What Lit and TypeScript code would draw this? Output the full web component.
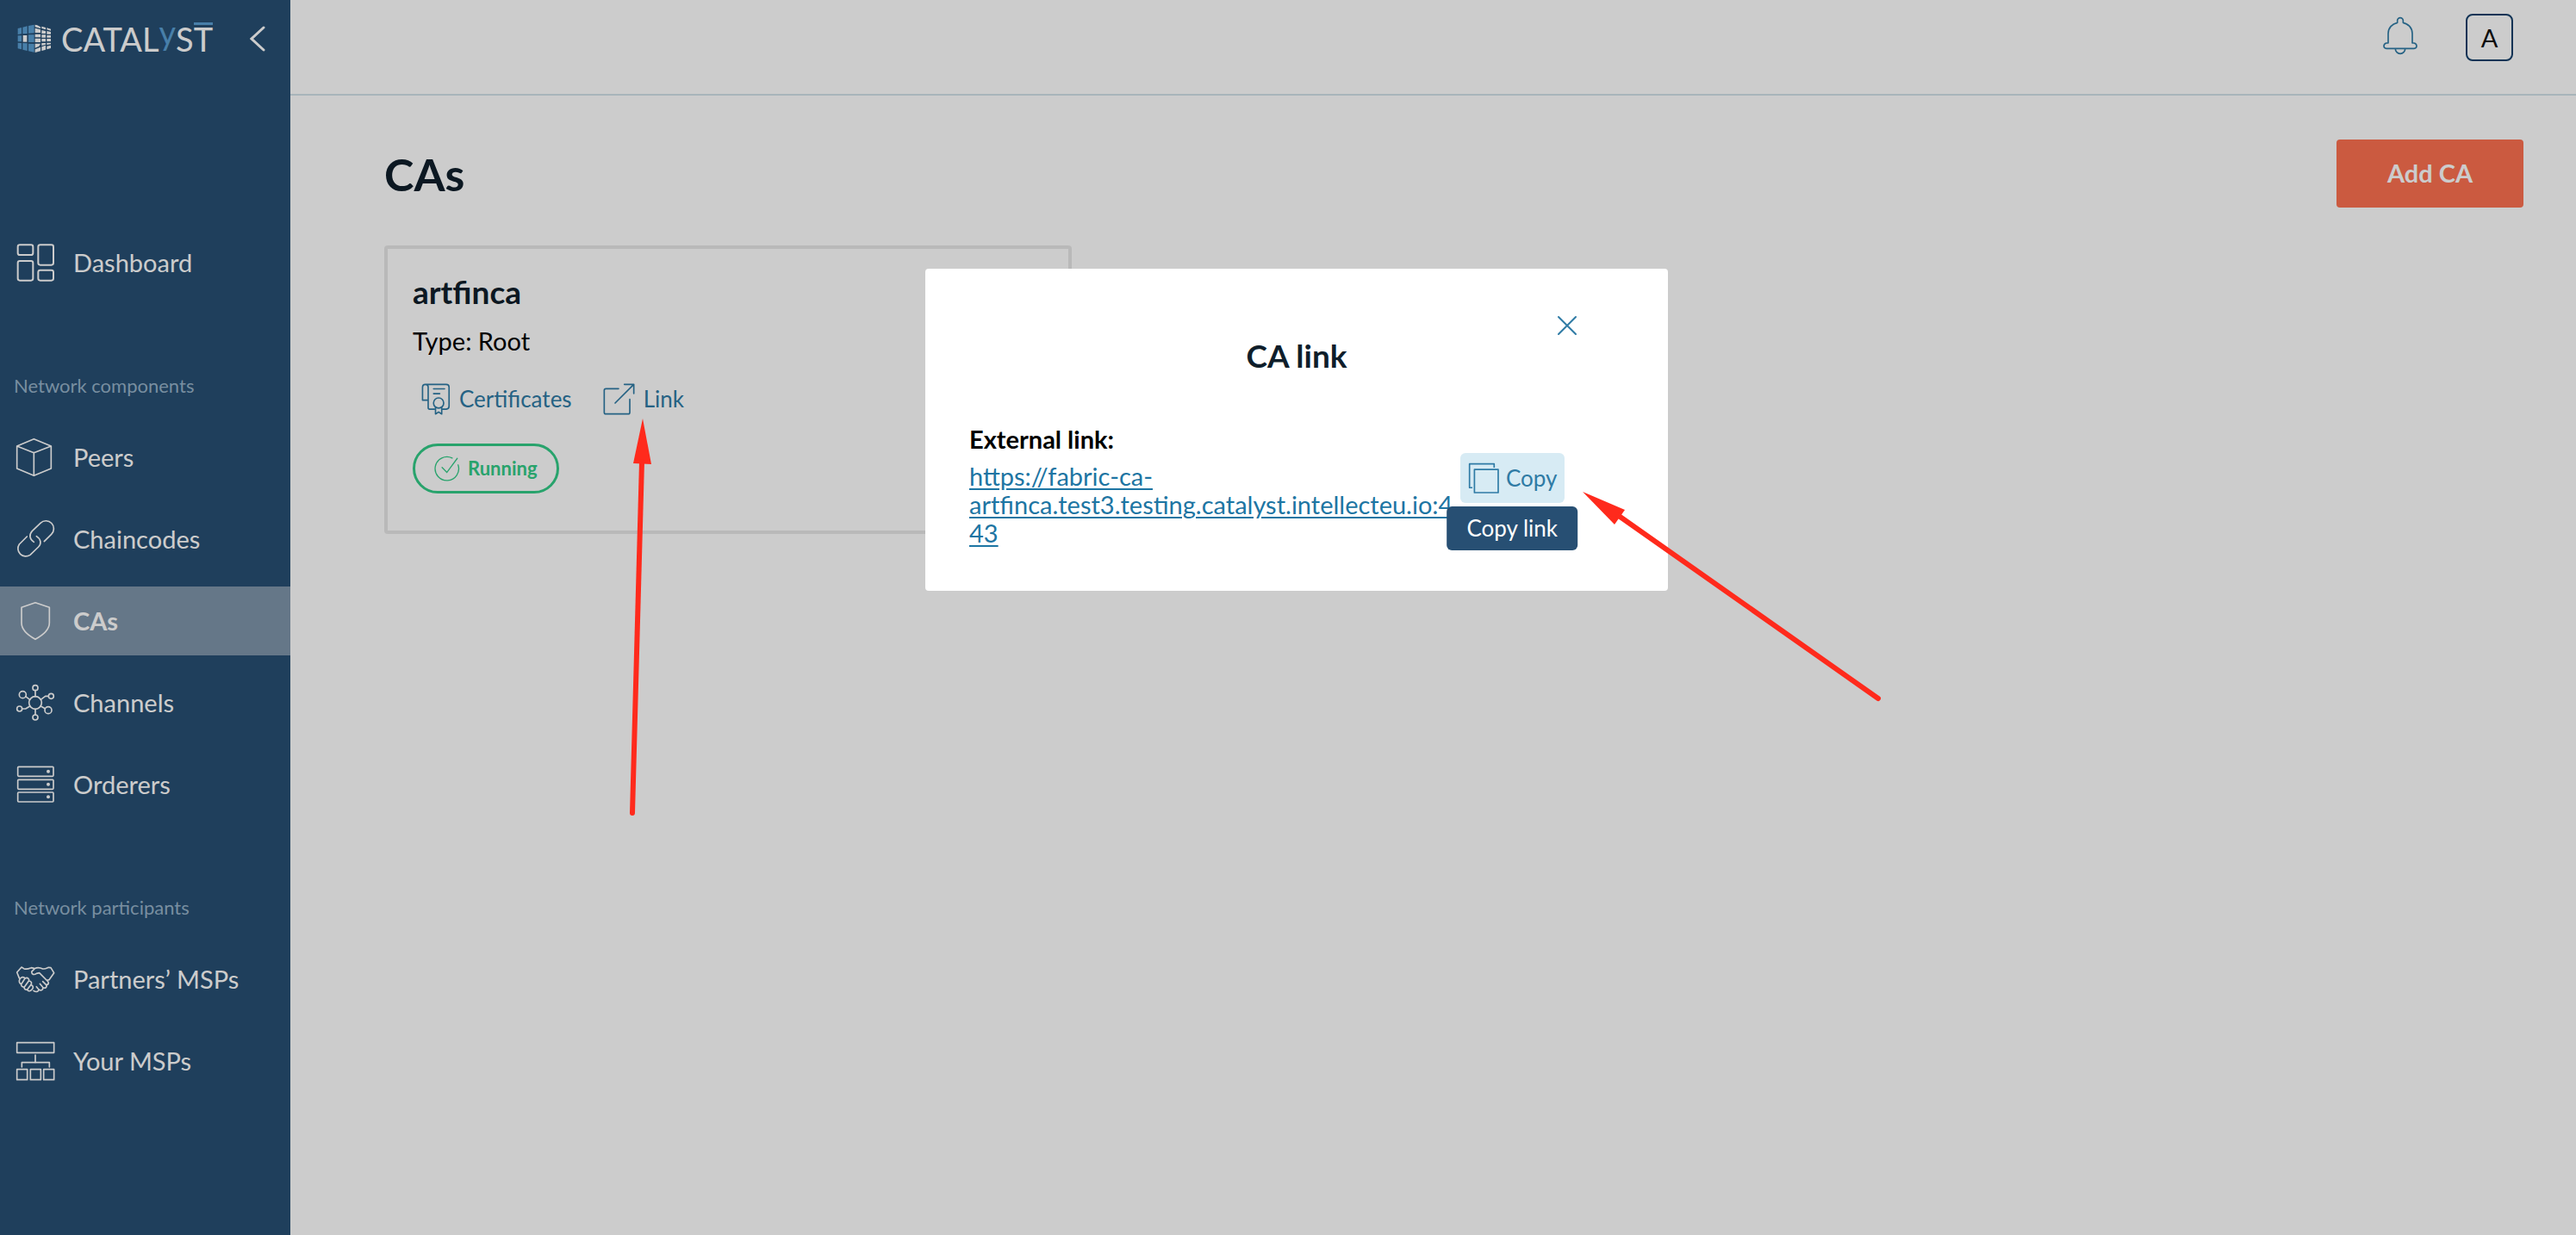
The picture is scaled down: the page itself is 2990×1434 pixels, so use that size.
import { LitElement, html, svg, css, nothing } from "lit";
import { customElement } from "lit/decorators.js";
import { classMap } from "lit/directives/class-map.js";

const icons: Record<string, unknown> = {
  dashboard: svg`<g stroke-width="6"><rect x="5" y="4" width="53" height="35" rx="7"/><rect x="76" y="4" width="53" height="70" rx="7"/><rect x="5" y="60" width="53" height="68" rx="7"/><rect x="76" y="92" width="53" height="36" rx="7"/></g>`,
  peers: svg`<path d="M61 2 121 27V105L61 130 2 105V27ZM2 27 61 50 121 27M61 50V130"/>`,
  chaincodes: svg`<path d="M97 74 122 49A27 27 0 0 0 84 10L55 38C44 50 45 66 61 76M37 57 10 84A27 27 0 0 0 48 121L77 93C88 82 86 66 70 56"/>`,
  cas: svg`<path d="M66 2 115 19V73C115 98 90 117 66 130C42 117 18 98 18 73V19Z"/>`,
  channels: svg`<circle cx="66" cy="66" r="22"/><circle cx="66" cy="14" r="9"/><circle cx="22" cy="38" r="12"/><circle cx="11" cy="87" r="9"/><circle cx="121" cy="43" r="9"/><circle cx="111" cy="92" r="12"/><circle cx="66" cy="117" r="9"/><path d="M66 23V44M66 88V108M32 44 47 55M20 87H32L47 78M112 43H101L85 55M85 78 100 86"/>`,
  orderers: svg`<rect x="5" y="4" width="124" height="33" rx="3"/><rect x="5" y="49" width="124" height="33" rx="3"/><rect x="5" y="93" width="124" height="33" rx="3"/><g fill="currentColor" stroke="none"><circle cx="111" cy="20" r="6"/><circle cx="111" cy="65" r="6"/><circle cx="111" cy="109" r="6"/></g>`,
  partners: svg`<path stroke-width="5" d="M10 62 2 42 18 24 26 29C36 33 44 29 52 26L64 29M64 29C72 24 82 25 92 30C102 31 106 27 112 25L120 26 131 44 114 68L106 70M64 29 53 40C53 50 62 52 70 46L80 44 108 72C116 80 110 88 102 84M92 74 104 86C108 94 100 100 92 94L82 82M92 94C94 104 86 107 78 102L70 92M78 102C78 110 68 112 60 106M12 66C16 58 26 56 30 63C40 58 46 66 43 72C52 72 56 80 50 86C60 88 60 96 54 102C48 110 40 108 38 102C30 104 26 98 28 93C20 94 14 88 18 82C10 82 8 72 12 66ZM30 63 18 82M43 72 28 93M50 86 38 102"/>`,
  msps: svg`<rect x="2" y="2" width="129" height="35"/><path d="M66 45V72M19 87V71H115V87"/><rect x="2" y="95" width="36" height="36"/><rect x="49" y="95" width="36" height="36"/><rect x="95" y="95" width="36" height="36"/>`,
};

interface NavItem { icon: string; label: string; active?: boolean }
const groups: { title?: string; items: NavItem[] }[] = [
  { items: [{ icon: "dashboard", label: "Dashboard" }] },
  {
    title: "Network components",
    items: [
      { icon: "peers", label: "Peers" },
      { icon: "chaincodes", label: "Chaincodes" },
      { icon: "cas", label: "CAs", active: true },
      { icon: "channels", label: "Channels" },
      { icon: "orderers", label: "Orderers" },
    ],
  },
  {
    title: "Network participants",
    items: [
      { icon: "partners", label: "Partners’ MSPs" },
      { icon: "msps", label: "Your MSPs" },
    ],
  },
];

const linkUrl = "https://fabric-ca-artfinca.test3.testing.catalyst.intellecteu.io:443";

@customElement("app-sidebar")
class AppSidebar extends LitElement {
  static styles = css`
    :host { display: block; background: #274f73; color: #fff; }
    .top { display: flex; align-items: center; justify-content: space-between; height: 90px; padding: 0 29px 0 20px; box-sizing: border-box; }
    .brand { display: flex; align-items: center; gap: 11px; color: #fff; text-decoration: none; }
    .mark { width: 40px; height: 34px; display: block; }
    .name { font-size: 38px; line-height: 44px; font-weight: 400; }
    .y { color: #5a9fd4; vertical-align: 8px; line-height: 0; }
    .bar { position: relative; }
    .bar::before { content: ""; position: absolute; left: 0; right: 0; top: 4px; height: 3px; background: #5a9fd4; }
    .collapse { border: 0; background: none; color: inherit; padding: 0; display: flex; }
    .collapse svg { width: 18px; height: 30px; }
    nav { padding-top: 175px; }
    .title { margin: 0; padding: 89px 16px 29px; font-size: 22px; line-height: 28px; font-weight: 400; color: #96b2c8; }
    ul { list-style: none; margin: 0; padding: 0; display: flex; flex-direction: column; gap: 15px; }
    .item { display: flex; align-items: center; gap: 22px; height: 80px; padding-left: 19px; color: inherit; text-decoration: none; font-size: 29px; line-height: 36px; }
    .item.active { background: #7f95aa; font-weight: 700; }
    .icon { width: 44px; height: 44px; fill: none; stroke: currentColor; stroke-width: 5; stroke-linejoin: round; stroke-linecap: round; overflow: visible; }
  `;
  render() {
    return html`
      <div class="top">
        <a class="brand" href="#">
          <svg class="mark" viewBox="62 84 120 102" aria-hidden="true">
            <g fill="#5a9fd4">
              <path d="M64 99 77 96V118L64 120ZM81 95 97 91V117L81 118ZM101 90 121 86V115L101 116Z"/>
              <path d="M64 124H77V145H64ZM101 121H121V147H101Z"/>
              <path d="M64 149 77 150V172L64 169ZM81 150 97 151V177L81 173ZM101 152 121 153V182L101 178Z"/>
            </g>
            <g fill="#fff">
              <path d="M82 123H96V146H82Z"/>
              <path d="M124 86 132 88 143 94V99L124 94ZM124 98 143 103V114H124ZM124 119H143V130H124ZM124 134H143V147H124ZM124 152H143L138 161 124 167ZM124 172 143 164V178L124 183Z"/>
              <path d="M147 92 161 96V103L147 99ZM147 105 161 108V117H147ZM147 121H161V131H147ZM147 135H161V145H147ZM147 150H161V155L147 159ZM147 163 161 158V173L147 177Z"/>
              <path d="M165 97 179 101V107L165 103ZM165 108 179 111V119H165ZM165 123H179V131H165ZM165 135H179V144H165ZM165 149H179V154L165 156ZM165 161 179 158V168L165 172Z"/>
            </g>
          </svg>
          <span class="name">CATAL<span class="y">y</span>S<span class="bar">T</span></span>
        </a>
        <button class="collapse" aria-label="Collapse menu">
          <svg viewBox="0 0 18 30" fill="none" stroke="currentColor" stroke-width="3" stroke-linecap="round"><path d="M16 2 2 15 16 28"/></svg>
        </button>
      </div>
      <nav>
        ${groups.map((g) => html`
          ${g.title ? html`<h2 class="title">${g.title}</h2>` : nothing}
          <ul>
            ${g.items.map((i) => html`<li>
              <a href="#" class=${classMap({ item: true, active: !!i.active })}>
                <svg class="icon" viewBox="0 0 132 132" aria-hidden="true">${icons[i.icon]}</svg>
                <span>${i.label}</span>
              </a>
            </li>`)}
          </ul>`)}
      </nav>
    `;
  }
}

@customElement("ca-card")
class CaCard extends LitElement {
  static styles = css`
    :host { display: block; box-sizing: border-box; border: 4px solid #e8e8e8; border-radius: 4px; padding: 28px 29px 43px; }
    h2 { margin: 0; font-size: 37px; line-height: 44px; font-weight: 700; color: #0f1e2b; }
    .type { margin: 18px 0 21px; font-size: 29px; line-height: 34px; color: #000; }
    .actions { display: flex; gap: 16px; margin-bottom: 23px; }
    .action { display: flex; align-items: center; gap: 10px; height: 58px; padding: 0 10px; border: 0; background: none; color: #2f7ba5; font-family: inherit; font-size: 26px; line-height: 32px; }
    .action svg { height: 37px; fill: none; stroke: currentColor; stroke-width: 5; stroke-linecap: round; stroke-linejoin: round; }
    .cert { width: 34px; }
    .out { width: 37px; }
    .status { display: inline-flex; align-items: center; gap: 9px; box-sizing: border-box; height: 58px; padding: 0 22px; border: 3px solid #33cc88; border-radius: 29px; color: #33cc88; font-size: 22px; line-height: 30px; font-weight: 700; }
    .status svg { width: 30px; height: 30px; fill: none; stroke: currentColor; stroke-width: 4; stroke-linecap: round; }
  `;
  render() {
    return html`
      <h2>artfinca</h2>
      <p class="type">Type: Root</p>
      <div class="actions">
        <button class="action">
          <svg class="cert" viewBox="179 884 101 113" aria-hidden="true"><path d="M224 976H207Q202 976 202 970V898Q202 888 192 888Q182 888 182 898V944H201M192 888H266Q276 888 276 898V966Q276 976 266 976H254M221 904H260M221 921H243M228 969V993L239 986 250 993V969"/><circle cx="239" cy="954" r="18"/></svg>
          Certificates
        </button>
        <button class="action">
          <svg class="out" viewBox="814 886 111 111" aria-hidden="true"><path d="M868 905H824Q818 905 818 911V987Q818 993 824 993H901Q907 993 907 987V942M856 955 920 891M888 890H921V922"/></svg>
          Link
        </button>
      </div>
      <div class="status">
        <svg viewBox="223 1134 92 92" aria-hidden="true"><path d="M287 1143A42 42 0 1 0 308 1167M251 1176 268 1194 305 1144"/></svg>
        Running
      </div>
    `;
  }
}

@customElement("link-dialog")
class LinkDialog extends LitElement {
  static styles = css`
    :host { display: block; position: relative; box-sizing: border-box; width: 862px; max-width: 100%; padding: 79px 51px 51px; background: #fff; border-radius: 4px; }
    h2 { margin: 0 0 58px; font-size: 37px; line-height: 44px; font-weight: 700; text-align: center; color: #0f1e2b; }
    .close { position: absolute; right: 99px; top: 48px; width: 36px; height: 36px; padding: 0; border: 0; background: none; color: #2f7ba5; display: flex; align-items: center; justify-content: center; }
    .close svg { width: 24px; height: 24px; }
    .body { display: flex; align-items: flex-start; }
    .text { width: 570px; }
    .label { margin: 0 0 9px; font-size: 29px; line-height: 34px; font-weight: 700; color: #000; }
    .url { display: block; font-size: 29px; line-height: 33px; color: #1d75a3; text-underline-offset: 3px; overflow-wrap: anywhere; }
    .copybox { position: relative; margin-top: 33px; }
    .copy { display: flex; align-items: center; gap: 8px; height: 58px; padding: 0 8px 0 9px; border: 0; border-radius: 6px; background: #d7ebf4; color: #2f7ba5; font-family: inherit; font-size: 26px; line-height: 32px; }
    .copy svg { width: 36px; height: 36px; }
    .tip { position: absolute; top: 62px; left: 50%; transform: translateX(-50%); padding: 9px 23px; border-radius: 6px; background: #274f73; color: #fff; font-size: 26px; line-height: 33px; white-space: nowrap; }
  `;
  render() {
    return html`
      <button class="close" aria-label="Close">
        <svg viewBox="0 0 24 24" fill="none" stroke="currentColor" stroke-width="2" stroke-linecap="round"><path d="M2 2 22 22M22 2 2 22"/></svg>
      </button>
      <h2>CA link</h2>
      <div class="body">
        <div class="text">
          <p class="label">External link:</p>
          <a class="url" href=${linkUrl}>${linkUrl}</a>
        </div>
        <div class="copybox">
          <button class="copy" aria-describedby="tip">
            <svg viewBox="551 713 107 107" fill="none" stroke="currentColor" stroke-width="5" stroke-linejoin="round" aria-hidden="true"><path d="M641 731V718H556V800H566M573 737H655V817H573Z"/></svg>
            Copy
          </button>
          <div class="tip" id="tip" role="tooltip">Copy link</div>
        </div>
      </div>
    `;
  }
}

@customElement("app-root")
class AppRoot extends LitElement {
  static styles = css`
    :host { display: block; position: relative; min-height: 100vh; font-family: Lato, "Liberation Sans", sans-serif; background: #fff; overflow: hidden; }
    .page { display: grid; grid-template-columns: 337px 1fr; min-height: 100vh; }
    header { box-sizing: border-box; height: 111px; padding: 16px 73px 0 0; border-bottom: 2px solid #d3e1e9; display: flex; justify-content: flex-end; align-items: flex-start; gap: 55px; }
    .bell { border: 0; background: none; padding: 3px 0 0; color: #2f7ba5; display: flex; }
    .bell svg { width: 42px; height: 45px; }
    .avatar { box-sizing: border-box; width: 55px; height: 55px; border: 2px solid #14406b; border-radius: 8px; background: none; color: #111; font-family: inherit; font-size: 29px; line-height: 34px; padding: 0; }
    .content { padding: 51px 61px 60px 109px; }
    .heading { display: flex; align-items: center; justify-content: space-between; margin-bottom: 44px; }
    h1 { margin: 0; font-size: 52px; line-height: 60px; font-weight: 700; color: #0f1e2b; }
    .add { width: 217px; height: 79px; border: 0; border-radius: 4px; background: #fe7150; color: #fff; font-family: inherit; font-size: 29px; line-height: 36px; font-weight: 700; padding: 0 0 2px; }
    .cards { display: grid; grid-template-columns: repeat(3, 1fr); gap: 44px; }
    .scrim { position: absolute; inset: 0; background: rgba(0, 0, 0, 0.2); display: flex; justify-content: center; align-items: flex-start; padding: 312px 0 0 20px; }
    .arrow { position: absolute; fill: #ff2a1c; stroke: #ff2a1c; overflow: visible; }
    .first { left: 730px; top: 484px; width: 30px; height: 464px; }
    .second { left: 1836px; top: 568px; width: 350px; height: 250px; }
  `;
  render() {
    return html`
      <div class="page">
        <app-sidebar></app-sidebar>
        <main>
          <header>
            <button class="bell" aria-label="Notifications">
              <svg viewBox="226 57 126 135" fill="none" stroke="currentColor" stroke-width="5" stroke-linejoin="round"><path d="M279 79V72A10 10 0 0 1 299 72V79C317 83 331 97 331 117V150H337Q346 152 346 160Q346 169 337 169H241Q232 169 232 160Q232 152 241 150H247V117C247 97 261 83 279 79ZM272 170A17 17 0 0 0 306 170"/></svg>
            </button>
            <button class="avatar">A</button>
          </header>
          <section class="content">
            <div class="heading">
              <h1>CAs</h1>
              <button class="add">Add CA</button>
            </div>
            <div class="cards"><ca-card></ca-card></div>
          </section>
        </main>
      </div>
      <div class="scrim"><link-dialog role="dialog" aria-label="CA link"></link-dialog></div>
      <svg class="arrow first" viewBox="0 0 30 464" aria-hidden="true"><path stroke="none" d="M16 2 26 55 5 54Z"/><path stroke-width="6" stroke-linecap="round" d="M15 52 4 460"/></svg>
      <svg class="arrow second" viewBox="0 0 350 250" aria-hidden="true"><path stroke="none" d="M1 3 50 24 38 41Z"/><path stroke-width="6" stroke-linecap="round" d="M43 31 344 243"/></svg>
    `;
  }
}
